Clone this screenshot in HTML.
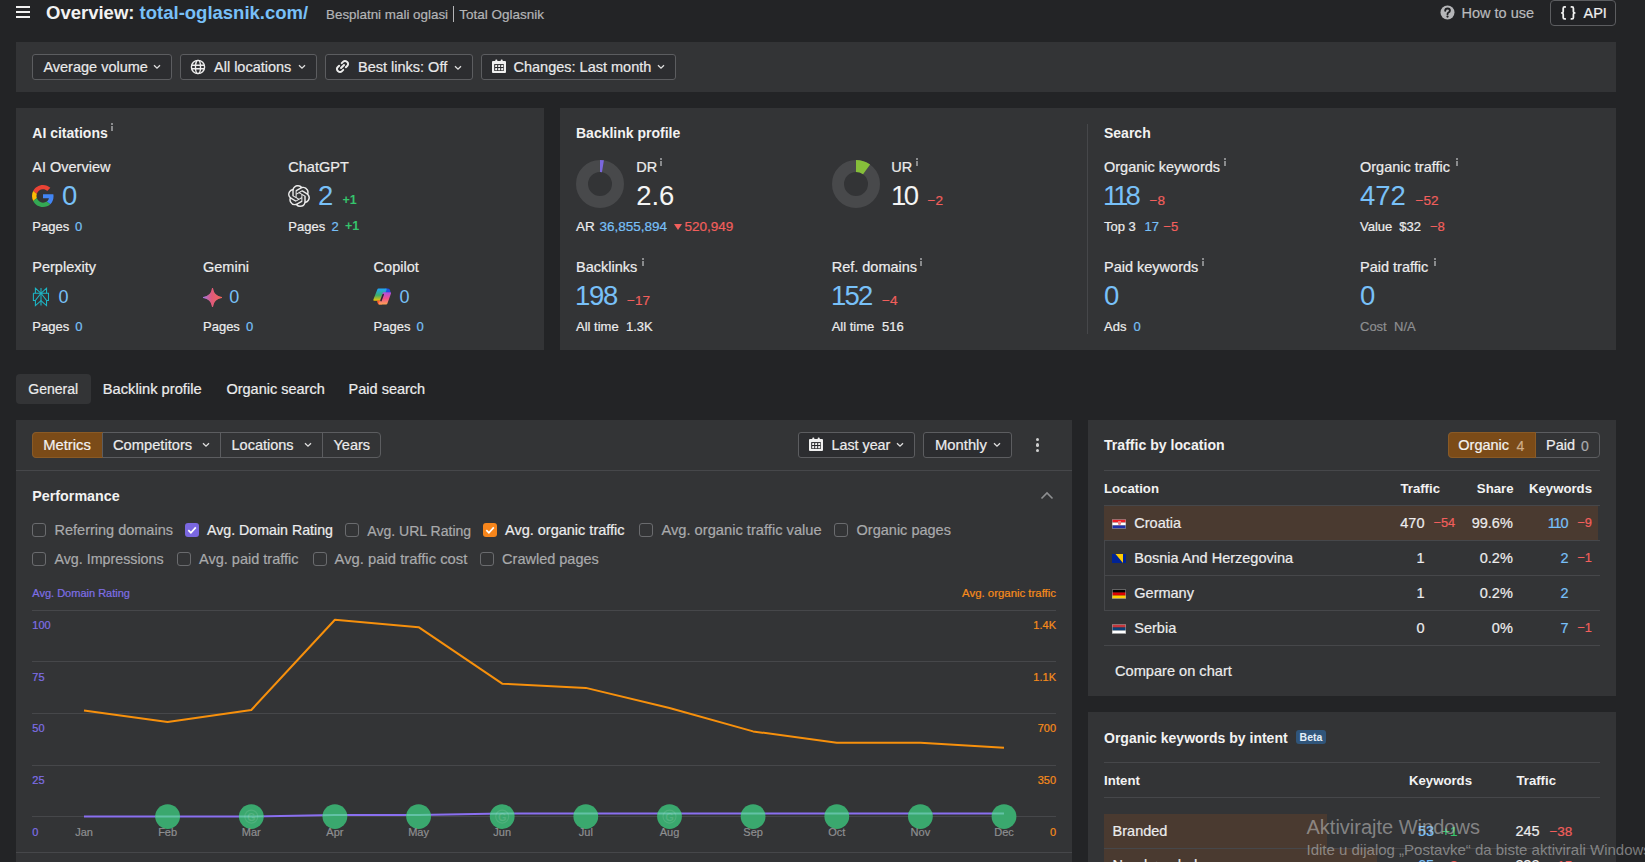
<!DOCTYPE html><html><head><meta charset="utf-8"><style>
html,body{margin:0;padding:0;width:1645px;height:862px;overflow:hidden;background:#232426;font-family:"Liberation Sans",sans-serif}
.t{position:absolute;white-space:nowrap;line-height:1}
.r{position:absolute}
</style></head><body>
<div class="r" style="left:16px;top:6px;width:14px;height:2px;background:#f0f0f0"></div>
<div class="r" style="left:16px;top:11px;width:14px;height:2px;background:#f0f0f0"></div>
<div class="r" style="left:16px;top:16px;width:14px;height:2px;background:#f0f0f0"></div>
<div class="t" style="left:46.00px;top:3.84px;font-size:18.5px;color:#f2f2f2;font-weight:700;">Overview: <span style="color:#78c0f8">total-oglasnik.com/</span></div>
<div class="t" style="left:326.00px;top:7.66px;font-size:13.4px;color:#b4b5b7;font-weight:400;-webkit-text-stroke:0.2px currentColor;">Besplatni mali oglasi</div>
<div class="r" style="left:453px;top:6px;width:1px;height:16px;background:#b4b5b7"></div>
<div class="t" style="left:459.30px;top:7.57px;font-size:13.5px;color:#b4b5b7;font-weight:400;-webkit-text-stroke:0.2px currentColor;">Total Oglasnik</div>
<svg class="r" style="left:1440.4px;top:5.3px" width="15" height="15" viewBox="0 0 15 15"><circle cx="7.5" cy="7.5" r="7" fill="#b5b6b8"/><path d="M5.2 5.7Q5.3 3.5 7.6 3.5Q9.9 3.5 9.9 5.5Q9.9 6.8 8.5 7.5Q7.5 8 7.5 9.3" fill="none" stroke="#1f2022" stroke-width="1.9" stroke-linecap="round"/><circle cx="7.5" cy="11.6" r="1.15" fill="#1f2022"/></svg>
<div class="t" style="left:1461.50px;top:5.93px;font-size:14.5px;color:#b9babc;font-weight:400;-webkit-text-stroke:0.2px currentColor;">How to use</div>
<div class="r" style="left:1550px;top:0px;width:66px;height:26px;border:1px solid #5c5d60;border-radius:4px;box-sizing:border-box;background:#212225"></div>
<svg class="r" style="left:1560.5px;top:6px" width="15" height="14" viewBox="0 0 15 14"><g fill="none" stroke="#f2f2f2" stroke-width="1.8" stroke-linecap="round" stroke-linejoin="round"><path d="M4.2 0.9H3.6Q2.2 0.9 2.2 2.4V5.4Q2.2 6.9 0.9 6.9Q2.2 6.9 2.2 8.4V11.4Q2.2 12.9 3.6 12.9H4.2"/><path d="M10.4 0.9H11Q12.4 0.9 12.4 2.4V5.4Q12.4 6.9 13.7 6.9Q12.4 6.9 12.4 8.4V11.4Q12.4 12.9 11 12.9H10.4"/></g></svg>
<div class="t" style="left:1583.50px;top:5.93px;font-size:14.5px;color:#f0f0f0;font-weight:400;-webkit-text-stroke:0.2px currentColor;">API</div>
<div class="r" style="left:16px;top:42px;width:1600px;height:50px;background:#333436"></div>
<div class="r" style="left:32px;top:54px;width:140px;height:26px;border:1px solid #5c5d60;border-radius:3px;box-sizing:border-box;background:#2c2d30"></div>
<div class="t" style="left:43.40px;top:59.73px;font-size:14.5px;color:#e9e9ea;font-weight:400;-webkit-text-stroke:0.2px currentColor;">Average volume</div>
<svg class="r" style="left:153px;top:64px" width="8" height="6" viewBox="0 0 8 6"><path d="M1 1.2 L4 4.2 L7 1.2" stroke="#e0e0e0" stroke-width="1.3" fill="none"/></svg>
<div class="r" style="left:180px;top:54px;width:137px;height:26px;border:1px solid #5c5d60;border-radius:3px;box-sizing:border-box;background:#2c2d30"></div>
<svg class="r" style="left:190px;top:59px" width="16" height="16" viewBox="0 0 16 16"><g fill="none" stroke="#ececec" stroke-width="1.4"><circle cx="8" cy="8" r="6.6"/><ellipse cx="8" cy="8" rx="2.5" ry="6.6"/><path d="M1.6 6.2H14.4M1.6 9.8H14.4"/></g></svg>
<div class="t" style="left:214.00px;top:59.73px;font-size:14.5px;color:#e9e9ea;font-weight:400;-webkit-text-stroke:0.2px currentColor;">All locations</div>
<svg class="r" style="left:298px;top:64px" width="8" height="6" viewBox="0 0 8 6"><path d="M1 1.2 L4 4.2 L7 1.2" stroke="#e0e0e0" stroke-width="1.3" fill="none"/></svg>
<div class="r" style="left:325px;top:54px;width:148px;height:26px;border:1px solid #5c5d60;border-radius:3px;box-sizing:border-box;background:#2c2d30"></div>
<svg class="r" style="left:335px;top:59px" width="15" height="15" viewBox="0 0 16 16"><g fill="none" stroke="#ececec" stroke-width="2.1" stroke-linecap="round"><path d="M6.4 9.6 L9.6 6.4"/><path d="M7.2 4.4 L8.8 2.8 a2.6 2.6 0 0 1 3.7 0 l0.7 0.7 a2.6 2.6 0 0 1 0 3.7 L11.6 8.8"/><path d="M8.8 11.6 L7.2 13.2 a2.6 2.6 0 0 1 -3.7 0 l-0.7 -0.7 a2.6 2.6 0 0 1 0 -3.7 L4.4 7.2"/></g></svg>
<div class="t" style="left:358.00px;top:59.73px;font-size:14.5px;color:#e9e9ea;font-weight:400;-webkit-text-stroke:0.2px currentColor;">Best links: Off</div>
<svg class="r" style="left:454px;top:64.5px" width="8" height="6" viewBox="0 0 8 6"><path d="M1 1.2 L4 4.2 L7 1.2" stroke="#e0e0e0" stroke-width="1.3" fill="none"/></svg>
<div class="r" style="left:481px;top:54px;width:195px;height:26px;border:1px solid #5c5d60;border-radius:3px;box-sizing:border-box;background:#2c2d30"></div>
<svg class="r" style="left:492px;top:58.6px" width="14" height="15" viewBox="0 0 14 15"><g fill="#f0f0f0"><rect x="3.3" y="0.5" width="2" height="2.2" rx="0.8"/><rect x="8.7" y="0.5" width="2" height="2.2" rx="0.8"/><rect x="0" y="1.9" width="14" height="12" rx="0.9"/></g><rect x="2.2" y="5.1" width="9.6" height="6.8" fill="#26272a"/><g fill="#f0f0f0"><rect x="3.10" y="6.00" width="2.1" height="2.1" rx="0.4"/><rect x="6.10" y="6.00" width="2.1" height="2.1" rx="0.4"/><rect x="9.10" y="6.00" width="2.1" height="2.1" rx="0.4"/><rect x="3.10" y="9.10" width="2.1" height="2.1" rx="0.4"/><rect x="6.10" y="9.10" width="2.1" height="2.1" rx="0.4"/><rect x="9.10" y="9.10" width="2.1" height="2.1" rx="0.4"/></g></svg>
<div class="t" style="left:513.50px;top:59.73px;font-size:14.5px;color:#e9e9ea;font-weight:400;-webkit-text-stroke:0.2px currentColor;">Changes: Last month</div>
<svg class="r" style="left:657px;top:64px" width="8" height="6" viewBox="0 0 8 6"><path d="M1 1.2 L4 4.2 L7 1.2" stroke="#e0e0e0" stroke-width="1.3" fill="none"/></svg>
<div class="r" style="left:16px;top:108px;width:528px;height:242px;background:#333436"></div>
<div class="t" style="left:32.30px;top:126.05px;font-size:14px;color:#f2f2f2;font-weight:700;">AI citations</div>
<div class="r" style="left:111px;top:123px;width:2px;height:2px;background:#8a8b8d"></div>
<div class="r" style="left:111px;top:126px;width:2px;height:5px;background:#8a8b8d"></div>
<div class="t" style="left:32.30px;top:160.03px;font-size:14.5px;color:#ececed;font-weight:400;-webkit-text-stroke:0.2px currentColor;">AI Overview</div>
<svg class="r" style="left:32px;top:185px" width="22" height="22" viewBox="0 0 48 48"><path fill="#EA4335" d="M24 9.5c3.54 0 6.71 1.22 9.21 3.6l6.85-6.85C35.9 2.38 30.47 0 24 0 14.62 0 6.51 5.38 2.56 13.22l7.98 6.19C12.43 13.72 17.74 9.5 24 9.5z"/><path fill="#4285F4" d="M46.98 24.55c0-1.57-.15-3.09-.38-4.55H24v9.02h12.94c-.58 2.96-2.26 5.48-4.78 7.18l7.73 6c4.51-4.18 7.09-10.36 7.09-17.65z"/><path fill="#FBBC05" d="M10.53 28.59c-.48-1.45-.76-2.99-.76-4.59s.27-3.14.76-4.59l-7.98-6.19C.92 16.46 0 20.12 0 24c0 3.88.92 7.54 2.56 10.78l7.97-6.19z"/><path fill="#34A853" d="M24 48c6.48 0 11.93-2.13 15.89-5.81l-7.73-6c-2.15 1.45-4.92 2.3-8.16 2.3-6.26 0-11.57-4.22-13.47-9.91l-7.98 6.19C6.51 42.62 14.62 48 24 48z"/></svg>
<div class="t" style="left:62.00px;top:181.92px;font-size:27.5px;color:#78c0f8;font-weight:400;">0</div>
<div class="t" style="left:32.30px;top:220.00px;font-size:13px;color:#ececed;font-weight:400;-webkit-text-stroke:0.2px currentColor;">Pages</div>
<div class="t" style="left:75.00px;top:220.00px;font-size:13px;color:#78c0f8;font-weight:400;-webkit-text-stroke:0.2px currentColor;">0</div>
<div class="t" style="left:288.30px;top:160.03px;font-size:14.5px;color:#ececed;font-weight:400;-webkit-text-stroke:0.2px currentColor;">ChatGPT</div>
<svg class="r" style="left:288px;top:185px" width="22" height="22" viewBox="0 0 24 24"><path fill="#ebebeb" d="M22.2819 9.8211a5.9847 5.9847 0 0 0-.5157-4.9108 6.0462 6.0462 0 0 0-6.5098-2.9A6.0651 6.0651 0 0 0 4.9807 4.1818a5.9847 5.9847 0 0 0-3.9977 2.9 6.0462 6.0462 0 0 0 .7427 7.0966 5.98 5.98 0 0 0 .511 4.9107 6.051 6.051 0 0 0 6.5146 2.9001A5.9847 5.9847 0 0 0 13.2599 24a6.0557 6.0557 0 0 0 5.7718-4.2058 5.9894 5.9894 0 0 0 3.9977-2.9001 6.0557 6.0557 0 0 0-.7475-7.0729zm-9.022 12.6081a4.4755 4.4755 0 0 1-2.8764-1.0408l.1419-.0804 4.7783-2.7582a.7948.7948 0 0 0 .3927-.6813v-6.7369l2.02 1.1686a.071.071 0 0 1 .038.052v5.5826a4.504 4.504 0 0 1-4.4945 4.4944zm-9.6607-4.1254a4.4708 4.4708 0 0 1-.5346-3.0137l.142.0852 4.783 2.7582a.7712.7712 0 0 0 .7806 0l5.8428-3.3685v2.3324a.0804.0804 0 0 1-.0332.0615L9.74 19.9502a4.4992 4.4992 0 0 1-6.1408-1.6464zM2.3408 7.8956a4.485 4.485 0 0 1 2.3655-1.9728V11.6a.7664.7664 0 0 0 .3879.6765l5.8144 3.3543-2.0201 1.1685a.0757.0757 0 0 1-.071 0l-4.8303-2.7865A4.504 4.504 0 0 1 2.3408 7.872zm16.5963 3.8558L13.1038 8.364 15.1192 7.2a.0757.0757 0 0 1 .071 0l4.8303 2.7913a4.4944 4.4944 0 0 1-.6765 8.1042v-5.6772a.79.79 0 0 0-.407-.667zm2.0107-3.0231l-.142-.0852-4.7735-2.7818a.7759.7759 0 0 0-.7854 0L9.409 9.2297V6.8974a.0662.0662 0 0 1 .0284-.0615l4.8303-2.7866a4.4992 4.4992 0 0 1 6.6802 4.66zM8.3065 12.863l-2.02-1.1638a.0804.0804 0 0 1-.038-.0567V6.0742a4.4992 4.4992 0 0 1 7.3757-3.4537l-.142.0805L8.704 5.459a.7948.7948 0 0 0-.3927.6813zm1.0976-2.3654l2.602-1.4998 2.6069 1.4998v2.9994l-2.5974 1.4997-2.6067-1.4997Z"/></svg>
<div class="t" style="left:318.00px;top:181.92px;font-size:27.5px;color:#78c0f8;font-weight:400;">2</div>
<div class="t" style="left:342.50px;top:194.02px;font-size:12.5px;color:#35c56c;font-weight:700;">+1</div>
<div class="t" style="left:288.30px;top:220.00px;font-size:13px;color:#ececed;font-weight:400;-webkit-text-stroke:0.2px currentColor;">Pages</div>
<div class="t" style="left:331.50px;top:220.00px;font-size:13px;color:#78c0f8;font-weight:400;-webkit-text-stroke:0.2px currentColor;">2</div>
<div class="t" style="left:345.00px;top:220.42px;font-size:12.5px;color:#35c56c;font-weight:700;">+1</div>
<div class="t" style="left:32.30px;top:260.23px;font-size:14.5px;color:#ececed;font-weight:400;-webkit-text-stroke:0.2px currentColor;">Perplexity</div>
<div class="t" style="left:58.50px;top:287.56px;font-size:18px;color:#78c0f8;font-weight:400;">0</div>
<div class="t" style="left:32.30px;top:320.00px;font-size:13px;color:#ececed;font-weight:400;-webkit-text-stroke:0.2px currentColor;">Pages</div>
<div class="t" style="left:75.30px;top:320.00px;font-size:13px;color:#78c0f8;font-weight:400;-webkit-text-stroke:0.2px currentColor;">0</div>
<div class="t" style="left:203.00px;top:260.23px;font-size:14.5px;color:#ececed;font-weight:400;-webkit-text-stroke:0.2px currentColor;">Gemini</div>
<div class="t" style="left:229.30px;top:287.56px;font-size:18px;color:#78c0f8;font-weight:400;">0</div>
<div class="t" style="left:203.00px;top:320.00px;font-size:13px;color:#ececed;font-weight:400;-webkit-text-stroke:0.2px currentColor;">Pages</div>
<div class="t" style="left:246.00px;top:320.00px;font-size:13px;color:#78c0f8;font-weight:400;-webkit-text-stroke:0.2px currentColor;">0</div>
<div class="t" style="left:373.60px;top:260.23px;font-size:14.5px;color:#ececed;font-weight:400;-webkit-text-stroke:0.2px currentColor;">Copilot</div>
<div class="t" style="left:399.60px;top:287.56px;font-size:18px;color:#78c0f8;font-weight:400;">0</div>
<div class="t" style="left:373.60px;top:320.00px;font-size:13px;color:#ececed;font-weight:400;-webkit-text-stroke:0.2px currentColor;">Pages</div>
<div class="t" style="left:416.60px;top:320.00px;font-size:13px;color:#78c0f8;font-weight:400;-webkit-text-stroke:0.2px currentColor;">0</div>
<svg class="r" style="left:28px;top:283px" width="26" height="26" viewBox="0 0 26 26"><g fill="none" stroke="#1db6c6" stroke-width="1.05" stroke-linejoin="miter" stroke-linecap="butt"><path d="M13 5.1V22.6"/><path d="M7.4 10.3V5.2L13 10.3L18.55 5.2V10.3"/><path d="M5.4 10.3H20.5V17.5H18.55M5.4 10.3V17.5H7.4"/><path d="M13 10.3L7.4 17.5V22.6L13 17.6L18.55 22.6V17.5L13 10.3"/></g></svg>
<svg class="r" style="left:202.5px;top:287.5px" width="19" height="19" viewBox="0 0 20 20"><defs><linearGradient id="gmg" x1="0" y1="0" x2="1" y2="0"><stop offset="0" stop-color="#a374e0"/><stop offset="0.45" stop-color="#e05a7a"/><stop offset="1" stop-color="#f2665a"/></linearGradient></defs><path d="M10 0.3 C10.7 5.5 14.5 9.3 19.7 10 C14.5 10.7 10.7 14.5 10 19.7 C9.3 14.5 5.5 10.7 0.3 10 C5.5 9.3 9.3 5.5 10 0.3Z" fill="url(#gmg)" stroke="url(#gmg)" stroke-width="1.1" stroke-linejoin="round"/></svg>
<svg class="r" style="left:373px;top:288px" width="19" height="18" viewBox="0 0 19 18"><defs><linearGradient id="cpl" x1="0" y1="0" x2="0" y2="1"><stop offset="0" stop-color="#1ea6ff"/><stop offset="0.55" stop-color="#3cae6a"/><stop offset="1" stop-color="#f4c300"/></linearGradient><linearGradient id="cpr" x1="0" y1="0" x2="0" y2="1"><stop offset="0" stop-color="#a84ee8"/><stop offset="0.5" stop-color="#f0508c"/><stop offset="1" stop-color="#ffa652"/></linearGradient></defs><path d="M12.5 0.5H15Q16.5 0.5 17 2L17.6 4.6H10.5Z" fill="#1f4fe0"/><path d="M5.5 0.5H13Q14 0.5 13.6 1.5L10 12Q9.6 12.8 8.8 12.8H1.2Q0 12.8 0.4 11.6L4.3 1.4Q4.6 0.5 5.5 0.5Z" fill="url(#cpl)"/><path d="M4 12.6H10L9 16.6H6.5Q5 16.6 4.6 15Z" fill="#ff5e2e"/><path d="M10.8 4.3H17.2Q18.4 4.3 18 5.5L14.3 15.8Q14 16.6 13.2 16.6H6.6Q5.4 16.6 5.8 15.4L9.6 5.2Q9.9 4.3 10.8 4.3Z" fill="url(#cpr)"/><path d="M10.2 6.5L8 12.6" stroke="#2a2b2e" stroke-width="1.6" stroke-linecap="round"/></svg>
<div class="r" style="left:560px;top:108px;width:1056px;height:242px;background:#333436"></div>
<div class="r" style="left:1087px;top:124px;width:1px;height:210px;background:#46474a"></div>
<div class="t" style="left:576.00px;top:126.15px;font-size:14px;color:#f2f2f2;font-weight:700;">Backlink profile</div>
<svg class="r" style="left:576px;top:160px" width="48" height="48" viewBox="0 0 48 48"><circle cx="24" cy="24" r="18" fill="none" stroke="#48494b" stroke-width="12"/><path d="M24 6 A18 18 0 0 1 26.93 6.24" fill="none" stroke="#7b67de" stroke-width="12"/></svg>
<div class="t" style="left:636.20px;top:159.93px;font-size:14.5px;color:#ececed;font-weight:400;-webkit-text-stroke:0.2px currentColor;">DR</div>
<div class="r" style="left:660px;top:158px;width:2px;height:2px;background:#8a8b8d"></div>
<div class="r" style="left:660px;top:161px;width:2px;height:5px;background:#8a8b8d"></div>
<div class="t" style="left:636.20px;top:182.12px;font-size:27.5px;color:#f4f4f4;font-weight:400;">2.6</div>
<div class="t" style="left:576.00px;top:220.07px;font-size:13.5px;color:#ececed;font-weight:400;-webkit-text-stroke:0.2px currentColor;">AR</div>
<div class="t" style="left:599.50px;top:220.07px;font-size:13.5px;color:#78c0f8;font-weight:400;-webkit-text-stroke:0.2px currentColor;">36,855,894</div>
<svg class="r" style="left:674px;top:224px" width="8" height="6" viewBox="0 0 8 6"><path d="M0 0H8L4 6Z" fill="#f25f5c"/></svg>
<div class="t" style="left:684.50px;top:220.07px;font-size:13.5px;color:#f25f5c;font-weight:400;-webkit-text-stroke:0.2px currentColor;">520,949</div>
<svg class="r" style="left:832px;top:160px" width="48" height="48" viewBox="0 0 48 48"><circle cx="24" cy="24" r="18" fill="none" stroke="#48494b" stroke-width="12"/><path d="M24 6 A18 18 0 0 1 34.58 9.44" fill="none" stroke="#86bf3a" stroke-width="12"/></svg>
<div class="t" style="left:891.30px;top:159.93px;font-size:14.5px;color:#ececed;font-weight:400;-webkit-text-stroke:0.2px currentColor;">UR</div>
<div class="r" style="left:916px;top:158px;width:2px;height:2px;background:#8a8b8d"></div>
<div class="r" style="left:916px;top:161px;width:2px;height:5px;background:#8a8b8d"></div>
<div class="t" style="left:891.00px;top:182.12px;font-size:27.5px;color:#f4f4f4;font-weight:400;letter-spacing:-2.5px">10</div>
<div class="t" style="left:927.50px;top:193.57px;font-size:13.5px;color:#f25f5c;font-weight:400;-webkit-text-stroke:0.2px currentColor;">−2</div>
<div class="t" style="left:576.00px;top:260.03px;font-size:14.5px;color:#ececed;font-weight:400;-webkit-text-stroke:0.2px currentColor;">Backlinks</div>
<div class="r" style="left:642px;top:258px;width:2px;height:2px;background:#8a8b8d"></div>
<div class="r" style="left:642px;top:261px;width:2px;height:5px;background:#8a8b8d"></div>
<div class="t" style="left:575.00px;top:282.12px;font-size:27.5px;color:#78c0f8;font-weight:400;letter-spacing:-1.3px">198</div>
<div class="t" style="left:627.00px;top:293.57px;font-size:13.5px;color:#f25f5c;font-weight:400;-webkit-text-stroke:0.2px currentColor;">−17</div>
<div class="t" style="left:576.00px;top:320.00px;font-size:13px;color:#ececed;font-weight:400;-webkit-text-stroke:0.2px currentColor;">All time</div>
<div class="t" style="left:626.00px;top:320.00px;font-size:13px;color:#ececed;font-weight:400;-webkit-text-stroke:0.2px currentColor;">1.3K</div>
<div class="t" style="left:831.70px;top:260.03px;font-size:14.5px;color:#ececed;font-weight:400;-webkit-text-stroke:0.2px currentColor;">Ref. domains</div>
<div class="r" style="left:920px;top:258px;width:2px;height:2px;background:#8a8b8d"></div>
<div class="r" style="left:920px;top:261px;width:2px;height:5px;background:#8a8b8d"></div>
<div class="t" style="left:831.00px;top:282.12px;font-size:27.5px;color:#78c0f8;font-weight:400;letter-spacing:-1.8px">152</div>
<div class="t" style="left:882.00px;top:293.57px;font-size:13.5px;color:#f25f5c;font-weight:400;-webkit-text-stroke:0.2px currentColor;">−4</div>
<div class="t" style="left:831.70px;top:320.00px;font-size:13px;color:#ececed;font-weight:400;-webkit-text-stroke:0.2px currentColor;">All time</div>
<div class="t" style="left:882.00px;top:320.00px;font-size:13px;color:#ececed;font-weight:400;-webkit-text-stroke:0.2px currentColor;">516</div>
<div class="t" style="left:1104.00px;top:126.15px;font-size:14px;color:#f2f2f2;font-weight:700;">Search</div>
<div class="t" style="left:1104.00px;top:159.93px;font-size:14.5px;color:#ececed;font-weight:400;-webkit-text-stroke:0.2px currentColor;">Organic keywords</div>
<div class="r" style="left:1224px;top:158px;width:2px;height:2px;background:#8a8b8d"></div>
<div class="r" style="left:1224px;top:161px;width:2px;height:5px;background:#8a8b8d"></div>
<div class="t" style="left:1103.00px;top:182.12px;font-size:27.5px;color:#78c0f8;font-weight:400;letter-spacing:-3px">118</div>
<div class="t" style="left:1149.50px;top:193.57px;font-size:13.5px;color:#f25f5c;font-weight:400;-webkit-text-stroke:0.2px currentColor;">−8</div>
<div class="t" style="left:1104.00px;top:220.00px;font-size:13px;color:#ececed;font-weight:400;-webkit-text-stroke:0.2px currentColor;">Top 3</div>
<div class="t" style="left:1144.50px;top:220.00px;font-size:13px;color:#78c0f8;font-weight:400;-webkit-text-stroke:0.2px currentColor;">17</div>
<div class="t" style="left:1163.30px;top:220.00px;font-size:13px;color:#f25f5c;font-weight:400;-webkit-text-stroke:0.2px currentColor;">−5</div>
<div class="t" style="left:1360.00px;top:159.93px;font-size:14.5px;color:#ececed;font-weight:400;-webkit-text-stroke:0.2px currentColor;">Organic traffic</div>
<div class="r" style="left:1456px;top:158px;width:2px;height:2px;background:#8a8b8d"></div>
<div class="r" style="left:1456px;top:161px;width:2px;height:5px;background:#8a8b8d"></div>
<div class="t" style="left:1360.00px;top:182.12px;font-size:27.5px;color:#78c0f8;font-weight:400;">472</div>
<div class="t" style="left:1415.50px;top:193.57px;font-size:13.5px;color:#f25f5c;font-weight:400;-webkit-text-stroke:0.2px currentColor;">−52</div>
<div class="t" style="left:1360.00px;top:220.00px;font-size:13px;color:#ececed;font-weight:400;-webkit-text-stroke:0.2px currentColor;">Value</div>
<div class="t" style="left:1399.30px;top:220.00px;font-size:13px;color:#ececed;font-weight:400;-webkit-text-stroke:0.2px currentColor;">$32</div>
<div class="t" style="left:1430.00px;top:220.00px;font-size:13px;color:#f25f5c;font-weight:400;-webkit-text-stroke:0.2px currentColor;">−8</div>
<div class="t" style="left:1104.00px;top:260.03px;font-size:14.5px;color:#ececed;font-weight:400;-webkit-text-stroke:0.2px currentColor;">Paid keywords</div>
<div class="r" style="left:1202px;top:258px;width:2px;height:2px;background:#8a8b8d"></div>
<div class="r" style="left:1202px;top:261px;width:2px;height:5px;background:#8a8b8d"></div>
<div class="t" style="left:1104.00px;top:282.12px;font-size:27.5px;color:#78c0f8;font-weight:400;">0</div>
<div class="t" style="left:1104.00px;top:320.00px;font-size:13px;color:#ececed;font-weight:400;-webkit-text-stroke:0.2px currentColor;">Ads</div>
<div class="t" style="left:1133.50px;top:320.00px;font-size:13px;color:#78c0f8;font-weight:400;-webkit-text-stroke:0.2px currentColor;">0</div>
<div class="t" style="left:1360.00px;top:260.03px;font-size:14.5px;color:#ececed;font-weight:400;-webkit-text-stroke:0.2px currentColor;">Paid traffic</div>
<div class="r" style="left:1434px;top:258px;width:2px;height:2px;background:#8a8b8d"></div>
<div class="r" style="left:1434px;top:261px;width:2px;height:5px;background:#8a8b8d"></div>
<div class="t" style="left:1360.00px;top:282.12px;font-size:27.5px;color:#78c0f8;font-weight:400;">0</div>
<div class="t" style="left:1360.00px;top:320.00px;font-size:13px;color:#8e8f91;font-weight:400;-webkit-text-stroke:0.2px currentColor;">Cost</div>
<div class="t" style="left:1394.00px;top:320.00px;font-size:13px;color:#8e8f91;font-weight:400;-webkit-text-stroke:0.2px currentColor;">N/A</div>
<div class="r" style="left:16px;top:374px;width:75px;height:30px;background:#333436;border-radius:4px"></div>
<div class="t" style="left:28.30px;top:382.25px;font-size:14px;color:#ececed;font-weight:400;-webkit-text-stroke:0.2px currentColor;">General</div>
<div class="t" style="left:102.80px;top:381.66px;font-size:14.7px;color:#ececed;font-weight:400;-webkit-text-stroke:0.2px currentColor;">Backlink profile</div>
<div class="t" style="left:226.40px;top:381.83px;font-size:14.5px;color:#ececed;font-weight:400;-webkit-text-stroke:0.2px currentColor;">Organic search</div>
<div class="t" style="left:348.60px;top:381.83px;font-size:14.5px;color:#ececed;font-weight:400;-webkit-text-stroke:0.2px currentColor;">Paid search</div>
<div class="r" style="left:16px;top:420px;width:1056px;height:450px;background:#333436"></div>
<div class="r" style="left:16px;top:470px;width:1056px;height:1px;background:#46474a"></div>
<div class="r" style="left:32px;top:432px;width:349px;height:26px;border:1px solid #5c5d60;border-radius:4px;box-sizing:border-box"></div>
<div class="r" style="left:32px;top:432px;width:71px;height:26px;background:#7b4b18;border-radius:4px 0 0 4px;border:1px solid #8a5a25;box-sizing:border-box"></div>
<div class="r" style="left:220px;top:433px;width:1px;height:24px;background:#5c5d60"></div>
<div class="r" style="left:322px;top:433px;width:1px;height:24px;background:#5c5d60"></div>
<div class="r" style="left:102px;top:433px;width:1px;height:24px;background:#5c5d60"></div>
<div class="t" style="left:43.20px;top:437.97px;font-size:14.8px;color:#f2f2f2;font-weight:400;-webkit-text-stroke:0.2px currentColor;">Metrics</div>
<div class="t" style="left:113.00px;top:438.06px;font-size:14.7px;color:#ececed;font-weight:400;-webkit-text-stroke:0.2px currentColor;">Competitors</div>
<svg class="r" style="left:202px;top:442px" width="8" height="6" viewBox="0 0 8 6"><path d="M1 1.2 L4 4.2 L7 1.2" stroke="#e0e0e0" stroke-width="1.3" fill="none"/></svg>
<div class="t" style="left:231.50px;top:438.23px;font-size:14.5px;color:#ececed;font-weight:400;-webkit-text-stroke:0.2px currentColor;">Locations</div>
<svg class="r" style="left:304px;top:442px" width="8" height="6" viewBox="0 0 8 6"><path d="M1 1.2 L4 4.2 L7 1.2" stroke="#e0e0e0" stroke-width="1.3" fill="none"/></svg>
<div class="t" style="left:333.50px;top:438.23px;font-size:14.5px;color:#ececed;font-weight:400;-webkit-text-stroke:0.2px currentColor;">Years</div>
<div class="r" style="left:798px;top:432px;width:117px;height:26px;border:1px solid #5c5d60;border-radius:3px;box-sizing:border-box;background:#2c2d30"></div>
<svg class="r" style="left:809px;top:437.2px" width="14" height="15" viewBox="0 0 14 15"><g fill="#f0f0f0"><rect x="3.3" y="0.5" width="2" height="2.2" rx="0.8"/><rect x="8.7" y="0.5" width="2" height="2.2" rx="0.8"/><rect x="0" y="1.9" width="14" height="12" rx="0.9"/></g><rect x="2.2" y="5.1" width="9.6" height="6.8" fill="#26272a"/><g fill="#f0f0f0"><rect x="3.10" y="6.00" width="2.1" height="2.1" rx="0.4"/><rect x="6.10" y="6.00" width="2.1" height="2.1" rx="0.4"/><rect x="9.10" y="6.00" width="2.1" height="2.1" rx="0.4"/><rect x="3.10" y="9.10" width="2.1" height="2.1" rx="0.4"/><rect x="6.10" y="9.10" width="2.1" height="2.1" rx="0.4"/><rect x="9.10" y="9.10" width="2.1" height="2.1" rx="0.4"/></g></svg>
<div class="t" style="left:831.50px;top:438.40px;font-size:14.3px;color:#ececed;font-weight:400;-webkit-text-stroke:0.2px currentColor;">Last year</div>
<svg class="r" style="left:896px;top:442px" width="8" height="6" viewBox="0 0 8 6"><path d="M1 1.2 L4 4.2 L7 1.2" stroke="#e0e0e0" stroke-width="1.3" fill="none"/></svg>
<div class="r" style="left:923px;top:432px;width:89px;height:26px;border:1px solid #5c5d60;border-radius:3px;box-sizing:border-box;background:#2c2d30"></div>
<div class="t" style="left:935.00px;top:437.97px;font-size:14.8px;color:#ececed;font-weight:400;-webkit-text-stroke:0.2px currentColor;">Monthly</div>
<svg class="r" style="left:993px;top:442px" width="8" height="6" viewBox="0 0 8 6"><path d="M1 1.2 L4 4.2 L7 1.2" stroke="#e0e0e0" stroke-width="1.3" fill="none"/></svg>
<div class="r" style="left:1036px;top:437.9px;width:3.4px;height:3.4px;border-radius:50%;background:#d0d0d0"></div>
<div class="r" style="left:1036px;top:443.4px;width:3.4px;height:3.4px;border-radius:50%;background:#d0d0d0"></div>
<div class="r" style="left:1036px;top:448.9px;width:3.4px;height:3.4px;border-radius:50%;background:#d0d0d0"></div>
<div class="t" style="left:32.30px;top:489.20px;font-size:14.3px;color:#f2f2f2;font-weight:700;">Performance</div>
<svg class="r" style="left:1040px;top:491px" width="14" height="9" viewBox="0 0 14 9"><path d="M1.5 7.5L7 2L12.5 7.5" stroke="#8e8f91" stroke-width="1.6" fill="none"/></svg>
<div class="r" style="left:32px;top:523px;width:14px;height:14px;border:1px solid #6a6b6e;border-radius:3px;box-sizing:border-box"></div>
<div class="t" style="left:54.50px;top:523.23px;font-size:14.5px;color:#a9aaac;font-weight:400;-webkit-text-stroke:0.2px currentColor;">Referring domains</div>
<svg class="r" style="left:185px;top:523px" width="14" height="14" viewBox="0 0 14 14"><rect width="14" height="14" rx="3" fill="#7a67e0"/><path d="M3.3 7.2L5.9 9.8L10.8 4.4" stroke="#fff" stroke-width="1.7" fill="none"/></svg>
<div class="t" style="left:207.00px;top:523.48px;font-size:14.2px;color:#ececed;font-weight:400;-webkit-text-stroke:0.2px currentColor;">Avg. Domain Rating</div>
<div class="r" style="left:345px;top:523px;width:14px;height:14px;border:1px solid #6a6b6e;border-radius:3px;box-sizing:border-box"></div>
<div class="t" style="left:367.30px;top:523.61px;font-size:14.05px;color:#a9aaac;font-weight:400;-webkit-text-stroke:0.2px currentColor;">Avg. URL Rating</div>
<svg class="r" style="left:483px;top:523px" width="14" height="14" viewBox="0 0 14 14"><rect width="14" height="14" rx="3" fill="#f7861c"/><path d="M3.3 7.2L5.9 9.8L10.8 4.4" stroke="#fff" stroke-width="1.7" fill="none"/></svg>
<div class="t" style="left:505.00px;top:523.23px;font-size:14.5px;color:#ececed;font-weight:400;-webkit-text-stroke:0.2px currentColor;">Avg. organic traffic</div>
<div class="r" style="left:639px;top:523px;width:14px;height:14px;border:1px solid #6a6b6e;border-radius:3px;box-sizing:border-box"></div>
<div class="t" style="left:661.40px;top:523.06px;font-size:14.7px;color:#a9aaac;font-weight:400;-webkit-text-stroke:0.2px currentColor;">Avg. organic traffic value</div>
<div class="r" style="left:834px;top:523px;width:14px;height:14px;border:1px solid #6a6b6e;border-radius:3px;box-sizing:border-box"></div>
<div class="t" style="left:856.60px;top:523.23px;font-size:14.5px;color:#a9aaac;font-weight:400;-webkit-text-stroke:0.2px currentColor;">Organic pages</div>
<div class="r" style="left:32px;top:552px;width:14px;height:14px;border:1px solid #6a6b6e;border-radius:3px;box-sizing:border-box"></div>
<div class="t" style="left:54.50px;top:552.44px;font-size:14.25px;color:#a9aaac;font-weight:400;-webkit-text-stroke:0.2px currentColor;">Avg. Impressions</div>
<div class="r" style="left:177px;top:552px;width:14px;height:14px;border:1px solid #6a6b6e;border-radius:3px;box-sizing:border-box"></div>
<div class="t" style="left:199.10px;top:552.23px;font-size:14.5px;color:#a9aaac;font-weight:400;-webkit-text-stroke:0.2px currentColor;">Avg. paid traffic</div>
<div class="r" style="left:313px;top:552px;width:14px;height:14px;border:1px solid #6a6b6e;border-radius:3px;box-sizing:border-box"></div>
<div class="t" style="left:334.60px;top:551.97px;font-size:14.8px;color:#a9aaac;font-weight:400;-webkit-text-stroke:0.2px currentColor;">Avg. paid traffic cost</div>
<div class="r" style="left:480px;top:552px;width:14px;height:14px;border:1px solid #6a6b6e;border-radius:3px;box-sizing:border-box"></div>
<div class="t" style="left:502.10px;top:552.23px;font-size:14.5px;color:#a9aaac;font-weight:400;-webkit-text-stroke:0.2px currentColor;">Crawled pages</div>
<div class="t" style="left:32.30px;top:588.19px;font-size:11px;color:#7f6fe6;font-weight:400;-webkit-text-stroke:0.2px currentColor;">Avg. Domain Rating</div>
<div class="t" style="right:589.00px;top:587.85px;font-size:11.4px;color:#f78c1b;font-weight:400;-webkit-text-stroke:0.2px currentColor;">Avg. organic traffic</div>
<div class="r" style="left:32px;top:609.5px;width:1024px;height:1px;background:#46474a"></div>
<div class="r" style="left:32px;top:661px;width:1024px;height:1px;background:#46474a"></div>
<div class="r" style="left:32px;top:713px;width:1024px;height:1px;background:#46474a"></div>
<div class="r" style="left:32px;top:764.5px;width:1024px;height:1px;background:#46474a"></div>
<div class="r" style="left:32px;top:816px;width:1024px;height:1px;background:#46474a"></div>
<div class="r" style="left:16px;top:852px;width:1056px;height:1px;background:#46474a"></div>
<div class="t" style="left:32.30px;top:620.29px;font-size:11px;color:#7f6fe6;font-weight:400;-webkit-text-stroke:0.2px currentColor;">100</div>
<div class="t" style="left:32.30px;top:671.69px;font-size:11px;color:#7f6fe6;font-weight:400;-webkit-text-stroke:0.2px currentColor;">75</div>
<div class="t" style="left:32.30px;top:723.19px;font-size:11px;color:#7f6fe6;font-weight:400;-webkit-text-stroke:0.2px currentColor;">50</div>
<div class="t" style="left:32.30px;top:774.69px;font-size:11px;color:#7f6fe6;font-weight:400;-webkit-text-stroke:0.2px currentColor;">25</div>
<div class="t" style="left:32.30px;top:826.69px;font-size:11px;color:#7f6fe6;font-weight:400;-webkit-text-stroke:0.2px currentColor;">0</div>
<div class="t" style="right:589.00px;top:620.29px;font-size:11px;color:#f78c1b;font-weight:400;-webkit-text-stroke:0.2px currentColor;">1.4K</div>
<div class="t" style="right:589.00px;top:671.69px;font-size:11px;color:#f78c1b;font-weight:400;-webkit-text-stroke:0.2px currentColor;">1.1K</div>
<div class="t" style="right:589.00px;top:723.19px;font-size:11px;color:#f78c1b;font-weight:400;-webkit-text-stroke:0.2px currentColor;">700</div>
<div class="t" style="right:589.00px;top:774.69px;font-size:11px;color:#f78c1b;font-weight:400;-webkit-text-stroke:0.2px currentColor;">350</div>
<div class="t" style="right:589.00px;top:826.69px;font-size:11px;color:#f78c1b;font-weight:400;-webkit-text-stroke:0.2px currentColor;">0</div>
<svg class="r" style="left:0;top:0" width="1645" height="862"><polyline points="84.0,710.6 167.6,721.9 251.3,710.0 334.9,619.7 418.6,627.2 502.2,683.7 585.8,687.9 669.5,708.0 753.1,731.4 836.8,742.8 920.4,742.8 1004.0,747.8" fill="none" stroke="#f7900c" stroke-width="2" stroke-linejoin="round"/><polyline points="84.0,816.5 167.6,816.5 251.3,816.5 334.9,815.0 418.6,815.0 502.2,813.5 585.8,813.5 669.5,813.5 753.1,813.5 836.8,813.5 920.4,813.5 1004.0,813.5" fill="none" stroke="#8a6ff0" stroke-width="2"/><defs><clipPath id="cc"><circle cx="167.6" cy="816.6" r="12.4"/><circle cx="251.3" cy="816.6" r="12.4"/><circle cx="334.9" cy="816.6" r="12.4"/><circle cx="418.6" cy="816.6" r="12.4"/><circle cx="502.2" cy="816.6" r="12.4"/><circle cx="585.8" cy="816.6" r="12.4"/><circle cx="669.5" cy="816.6" r="12.4"/><circle cx="753.1" cy="816.6" r="12.4"/><circle cx="836.8" cy="816.6" r="12.4"/><circle cx="920.4" cy="816.6" r="12.4"/><circle cx="1004.0" cy="816.6" r="12.4"/></clipPath></defs><circle cx="167.6" cy="816.6" r="12.4" fill="#3aa86e"/><circle cx="251.3" cy="816.6" r="12.4" fill="#3aa86e"/><circle cx="334.9" cy="816.6" r="12.4" fill="#3aa86e"/><circle cx="418.6" cy="816.6" r="12.4" fill="#3aa86e"/><circle cx="502.2" cy="816.6" r="12.4" fill="#3aa86e"/><circle cx="585.8" cy="816.6" r="12.4" fill="#3aa86e"/><circle cx="669.5" cy="816.6" r="12.4" fill="#3aa86e"/><circle cx="753.1" cy="816.6" r="12.4" fill="#3aa86e"/><circle cx="836.8" cy="816.6" r="12.4" fill="#3aa86e"/><circle cx="920.4" cy="816.6" r="12.4" fill="#3aa86e"/><circle cx="1004.0" cy="816.6" r="12.4" fill="#3aa86e"/><polyline points="84.0,816.5 167.6,816.5 251.3,816.5 334.9,815.0 418.6,815.0 502.2,813.5 585.8,813.5 669.5,813.5 753.1,813.5 836.8,813.5 920.4,813.5 1004.0,813.5" fill="none" stroke="#62c2a6" stroke-width="2" clip-path="url(#cc)"/><circle cx="251.3" cy="816.6" r="6.5" fill="none" stroke="rgba(255,255,255,0.10)" stroke-width="1.2"/><text x="251.3" y="820.6" text-anchor="middle" font-family="Liberation Sans" font-size="11" font-weight="700" fill="rgba(255,255,255,0.13)">G</text><circle cx="502.2" cy="816.6" r="6.5" fill="none" stroke="rgba(255,255,255,0.10)" stroke-width="1.2"/><text x="502.2" y="820.6" text-anchor="middle" font-family="Liberation Sans" font-size="11" font-weight="700" fill="rgba(255,255,255,0.13)">G</text><circle cx="669.5" cy="816.6" r="6.5" fill="none" stroke="rgba(255,255,255,0.10)" stroke-width="1.2"/><text x="669.5" y="820.6" text-anchor="middle" font-family="Liberation Sans" font-size="11" font-weight="700" fill="rgba(255,255,255,0.13)">G</text></svg>
<div class="t" style="left:-16.00px;width:200px;text-align:center;top:826.59px;font-size:11px;color:#8e8f91;font-weight:400;-webkit-text-stroke:0.2px currentColor;">Jan</div>
<div class="t" style="left:67.64px;width:200px;text-align:center;top:826.59px;font-size:11px;color:#8e8f91;font-weight:400;-webkit-text-stroke:0.2px currentColor;">Feb</div>
<div class="t" style="left:151.28px;width:200px;text-align:center;top:826.59px;font-size:11px;color:#8e8f91;font-weight:400;-webkit-text-stroke:0.2px currentColor;">Mar</div>
<div class="t" style="left:234.92px;width:200px;text-align:center;top:826.59px;font-size:11px;color:#8e8f91;font-weight:400;-webkit-text-stroke:0.2px currentColor;">Apr</div>
<div class="t" style="left:318.56px;width:200px;text-align:center;top:826.59px;font-size:11px;color:#8e8f91;font-weight:400;-webkit-text-stroke:0.2px currentColor;">May</div>
<div class="t" style="left:402.20px;width:200px;text-align:center;top:826.59px;font-size:11px;color:#8e8f91;font-weight:400;-webkit-text-stroke:0.2px currentColor;">Jun</div>
<div class="t" style="left:485.84px;width:200px;text-align:center;top:826.59px;font-size:11px;color:#8e8f91;font-weight:400;-webkit-text-stroke:0.2px currentColor;">Jul</div>
<div class="t" style="left:569.48px;width:200px;text-align:center;top:826.59px;font-size:11px;color:#8e8f91;font-weight:400;-webkit-text-stroke:0.2px currentColor;">Aug</div>
<div class="t" style="left:653.12px;width:200px;text-align:center;top:826.59px;font-size:11px;color:#8e8f91;font-weight:400;-webkit-text-stroke:0.2px currentColor;">Sep</div>
<div class="t" style="left:736.76px;width:200px;text-align:center;top:826.59px;font-size:11px;color:#8e8f91;font-weight:400;-webkit-text-stroke:0.2px currentColor;">Oct</div>
<div class="t" style="left:820.40px;width:200px;text-align:center;top:826.59px;font-size:11px;color:#8e8f91;font-weight:400;-webkit-text-stroke:0.2px currentColor;">Nov</div>
<div class="t" style="left:904.04px;width:200px;text-align:center;top:826.59px;font-size:11px;color:#8e8f91;font-weight:400;-webkit-text-stroke:0.2px currentColor;">Dec</div>
<div class="r" style="left:1088px;top:420px;width:528px;height:276px;background:#333436"></div>
<div class="t" style="left:1104.00px;top:438.37px;font-size:14.1px;color:#f2f2f2;font-weight:700;">Traffic by location</div>
<div class="r" style="left:1448px;top:432px;width:152px;height:26px;border:1px solid #5c5d60;border-radius:4px;box-sizing:border-box"></div>
<div class="r" style="left:1448px;top:432px;width:88px;height:26px;background:#7b4b18;border-radius:4px 0 0 4px;border:1px solid #8a5a25;box-sizing:border-box"></div>
<div class="t" style="left:1458.30px;top:437.73px;font-size:14.5px;color:#f2f2f2;font-weight:400;-webkit-text-stroke:0.2px currentColor;">Organic</div>
<div class="t" style="left:1516.50px;top:438.75px;font-size:14px;color:#cfae88;font-weight:400;-webkit-text-stroke:0.2px currentColor;">4</div>
<div class="t" style="left:1546.00px;top:437.73px;font-size:14.5px;color:#ececed;font-weight:400;-webkit-text-stroke:0.2px currentColor;">Paid</div>
<div class="t" style="left:1581.00px;top:438.75px;font-size:14px;color:#a9aaac;font-weight:400;-webkit-text-stroke:0.2px currentColor;">0</div>
<div class="r" style="left:1104px;top:470px;width:496px;height:1px;background:#46474a"></div>
<div class="t" style="left:1104.00px;top:482.13px;font-size:13.2px;color:#f2f2f2;font-weight:700;">Location</div>
<div class="t" style="right:205.00px;top:482.13px;font-size:13.2px;color:#f2f2f2;font-weight:700;">Traffic</div>
<div class="t" style="right:131.50px;top:482.13px;font-size:13.2px;color:#f2f2f2;font-weight:700;">Share</div>
<div class="t" style="right:53.00px;top:482.13px;font-size:13.2px;color:#f2f2f2;font-weight:700;">Keywords</div>
<div class="r" style="left:1104px;top:505px;width:496px;height:1px;background:#46474a"></div>
<div class="r" style="left:1104px;top:506px;width:494px;height:34px;background:#4a3a30"></div>
<svg class="r" style="left:1112px;top:518.5px" width="14" height="10" viewBox="0 0 14 10"><g transform="translate(0,0.5)"><rect x="0" y="0" width="14" height="3" fill="#f01c24"/><rect x="0" y="3" width="14" height="3" fill="#ffffff"/><rect x="0" y="6" width="14" height="3" fill="#1f2fa8"/></g><rect x="0.5" y="0.5" width="13" height="9" fill="none" stroke="rgba(160,160,160,0.55)" stroke-width="1"/></svg>
<div class="r" style="left:1117.5px;top:521px;width:3px;height:4px;background:#f08080;border-radius:0 0 2px 2px"></div>
<div class="t" style="left:1134.30px;top:516.23px;font-size:14.5px;color:#ececed;font-weight:400;-webkit-text-stroke:0.2px currentColor;">Croatia</div>
<div class="t" style="right:220.50px;top:516.23px;font-size:14.5px;color:#ececed;font-weight:400;-webkit-text-stroke:0.2px currentColor;">470</div>
<div class="t" style="left:1433.50px;top:517.17px;font-size:12.8px;color:#f25f5c;font-weight:400;-webkit-text-stroke:0.2px currentColor;">−54</div>
<div class="t" style="right:132.20px;top:516.23px;font-size:14.5px;color:#ececed;font-weight:400;-webkit-text-stroke:0.2px currentColor;">99.6%</div>
<div class="t" style="right:77.70px;top:516.23px;font-size:14.5px;color:#78c0f8;font-weight:400;-webkit-text-stroke:0.2px currentColor;letter-spacing:-1.2px;">110</div>
<div class="t" style="left:1577.30px;top:517.17px;font-size:12.8px;color:#f25f5c;font-weight:400;-webkit-text-stroke:0.2px currentColor;">−9</div>
<svg class="r" style="left:1112px;top:554px" width="14" height="9" viewBox="0 0 14 9"><rect width="14" height="9" fill="#002395"/><path d="M3.5 0H11V9Z" fill="#fecb00"/></svg>
<div class="t" style="left:1134.30px;top:551.23px;font-size:14.5px;color:#ececed;font-weight:400;-webkit-text-stroke:0.2px currentColor;">Bosnia And Herzegovina</div>
<div class="t" style="right:220.50px;top:551.23px;font-size:14.5px;color:#ececed;font-weight:400;-webkit-text-stroke:0.2px currentColor;">1</div>
<div class="t" style="right:132.20px;top:551.23px;font-size:14.5px;color:#ececed;font-weight:400;-webkit-text-stroke:0.2px currentColor;">0.2%</div>
<div class="t" style="right:76.50px;top:551.23px;font-size:14.5px;color:#78c0f8;font-weight:400;-webkit-text-stroke:0.2px currentColor;">2</div>
<div class="t" style="left:1577.30px;top:552.17px;font-size:12.8px;color:#f25f5c;font-weight:400;-webkit-text-stroke:0.2px currentColor;">−1</div>
<div class="r" style="left:1104px;top:540px;width:496px;height:1px;background:#46474a"></div>
<svg class="r" style="left:1112px;top:588.5px" width="14" height="10" viewBox="0 0 14 10"><g transform="translate(0,0.5)"><rect x="0" y="0" width="14" height="3" fill="#000"/><rect x="0" y="3" width="14" height="3" fill="#dd0000"/><rect x="0" y="6" width="14" height="3" fill="#ffce00"/></g><rect x="0.5" y="0.5" width="13" height="9" fill="none" stroke="rgba(160,160,160,0.55)" stroke-width="1"/></svg>
<div class="t" style="left:1134.30px;top:586.23px;font-size:14.5px;color:#ececed;font-weight:400;-webkit-text-stroke:0.2px currentColor;">Germany</div>
<div class="t" style="right:220.50px;top:586.23px;font-size:14.5px;color:#ececed;font-weight:400;-webkit-text-stroke:0.2px currentColor;">1</div>
<div class="t" style="right:132.20px;top:586.23px;font-size:14.5px;color:#ececed;font-weight:400;-webkit-text-stroke:0.2px currentColor;">0.2%</div>
<div class="t" style="right:76.50px;top:586.23px;font-size:14.5px;color:#78c0f8;font-weight:400;-webkit-text-stroke:0.2px currentColor;">2</div>
<div class="r" style="left:1104px;top:575px;width:496px;height:1px;background:#46474a"></div>
<svg class="r" style="left:1112px;top:623.5px" width="14" height="10" viewBox="0 0 14 10"><g transform="translate(0,0.5)"><rect x="0" y="0" width="14" height="3" fill="#c6363c"/><rect x="0" y="3" width="14" height="3" fill="#0c4076"/><rect x="0" y="6" width="14" height="3" fill="#fff"/></g><rect x="0.5" y="0.5" width="13" height="9" fill="none" stroke="rgba(160,160,160,0.55)" stroke-width="1"/></svg>
<div class="t" style="left:1134.30px;top:621.23px;font-size:14.5px;color:#ececed;font-weight:400;-webkit-text-stroke:0.2px currentColor;">Serbia</div>
<div class="t" style="right:220.50px;top:621.23px;font-size:14.5px;color:#ececed;font-weight:400;-webkit-text-stroke:0.2px currentColor;">0</div>
<div class="t" style="right:132.20px;top:621.23px;font-size:14.5px;color:#ececed;font-weight:400;-webkit-text-stroke:0.2px currentColor;">0%</div>
<div class="t" style="right:76.50px;top:621.23px;font-size:14.5px;color:#78c0f8;font-weight:400;-webkit-text-stroke:0.2px currentColor;">7</div>
<div class="t" style="left:1577.30px;top:622.17px;font-size:12.8px;color:#f25f5c;font-weight:400;-webkit-text-stroke:0.2px currentColor;">−1</div>
<div class="r" style="left:1104px;top:610px;width:496px;height:1px;background:#46474a"></div>
<div class="r" style="left:1104px;top:645px;width:496px;height:1px;background:#46474a"></div>
<div class="r" style="left:1104px;top:540px;width:1px;height:70px;background:#46474a"></div>
<div class="t" style="left:1115.00px;top:664.04px;font-size:14.6px;color:#ececed;font-weight:400;-webkit-text-stroke:0.2px currentColor;">Compare on chart</div>
<div class="r" style="left:1088px;top:712px;width:528px;height:160px;background:#333436"></div>
<div class="t" style="left:1104.00px;top:730.55px;font-size:14px;color:#f2f2f2;font-weight:700;">Organic keywords by intent</div>
<div class="r" style="left:1296px;top:730px;width:30px;height:14px;background:#30557a;border-radius:3px"></div>
<div class="t" style="left:1211.00px;width:200px;text-align:center;top:732.11px;font-size:10.5px;color:#e4eef8;font-weight:700;">Beta</div>
<div class="r" style="left:1104px;top:762px;width:496px;height:1px;background:#46474a"></div>
<div class="t" style="left:1104.00px;top:774.43px;font-size:13.2px;color:#f2f2f2;font-weight:700;">Intent</div>
<div class="t" style="right:173.00px;top:774.43px;font-size:13.2px;color:#f2f2f2;font-weight:700;">Keywords</div>
<div class="t" style="right:89.00px;top:774.43px;font-size:13.2px;color:#f2f2f2;font-weight:700;">Traffic</div>
<div class="r" style="left:1104px;top:797px;width:496px;height:1px;background:#46474a"></div>
<div class="r" style="left:1104px;top:814px;width:223px;height:34px;background:#4a3a30"></div>
<div class="r" style="left:1104px;top:849px;width:273px;height:20px;background:#4a3a30"></div>
<div class="r" style="left:1104px;top:848px;width:496px;height:1px;background:#46474a"></div>
<div class="t" style="left:1112.60px;top:824.33px;font-size:14.5px;color:#ececed;font-weight:400;-webkit-text-stroke:0.2px currentColor;">Branded</div>
<div class="t" style="left:1418.00px;top:824.33px;font-size:14.5px;color:#78c0f8;font-weight:400;-webkit-text-stroke:0.2px currentColor;">53</div>
<div class="t" style="left:1442.00px;top:825.17px;font-size:13.5px;color:#35c56c;font-weight:400;-webkit-text-stroke:0.2px currentColor;">+1</div>
<div class="t" style="left:1515.40px;top:824.33px;font-size:14.5px;color:#ececed;font-weight:400;-webkit-text-stroke:0.2px currentColor;">245</div>
<div class="t" style="left:1549.40px;top:825.17px;font-size:13.5px;color:#f25f5c;font-weight:400;-webkit-text-stroke:0.2px currentColor;">−38</div>
<div class="t" style="left:1112.60px;top:858.13px;font-size:14.5px;color:#ececed;font-weight:400;-webkit-text-stroke:0.2px currentColor;">Non-branded</div>
<div class="t" style="left:1418.00px;top:858.13px;font-size:14.5px;color:#78c0f8;font-weight:400;-webkit-text-stroke:0.2px currentColor;">65</div>
<div class="t" style="left:1442.00px;top:858.97px;font-size:13.5px;color:#f25f5c;font-weight:400;-webkit-text-stroke:0.2px currentColor;">−8</div>
<div class="t" style="left:1515.40px;top:858.13px;font-size:14.5px;color:#ececed;font-weight:400;-webkit-text-stroke:0.2px currentColor;">292</div>
<div class="t" style="left:1549.40px;top:858.97px;font-size:13.5px;color:#f25f5c;font-weight:400;-webkit-text-stroke:0.2px currentColor;">−15</div>
<div class="t" style="left:1306.50px;top:817.07px;font-size:20px;color:rgba(200,200,200,0.55);font-weight:400;">Aktivirajte Windows</div>
<div class="t" style="left:1306.50px;top:841.90px;font-size:15px;color:rgba(200,200,200,0.55);font-weight:400;">Idite u dijalog „Postavke“ da biste aktivirali Windows.</div>
</body></html>
